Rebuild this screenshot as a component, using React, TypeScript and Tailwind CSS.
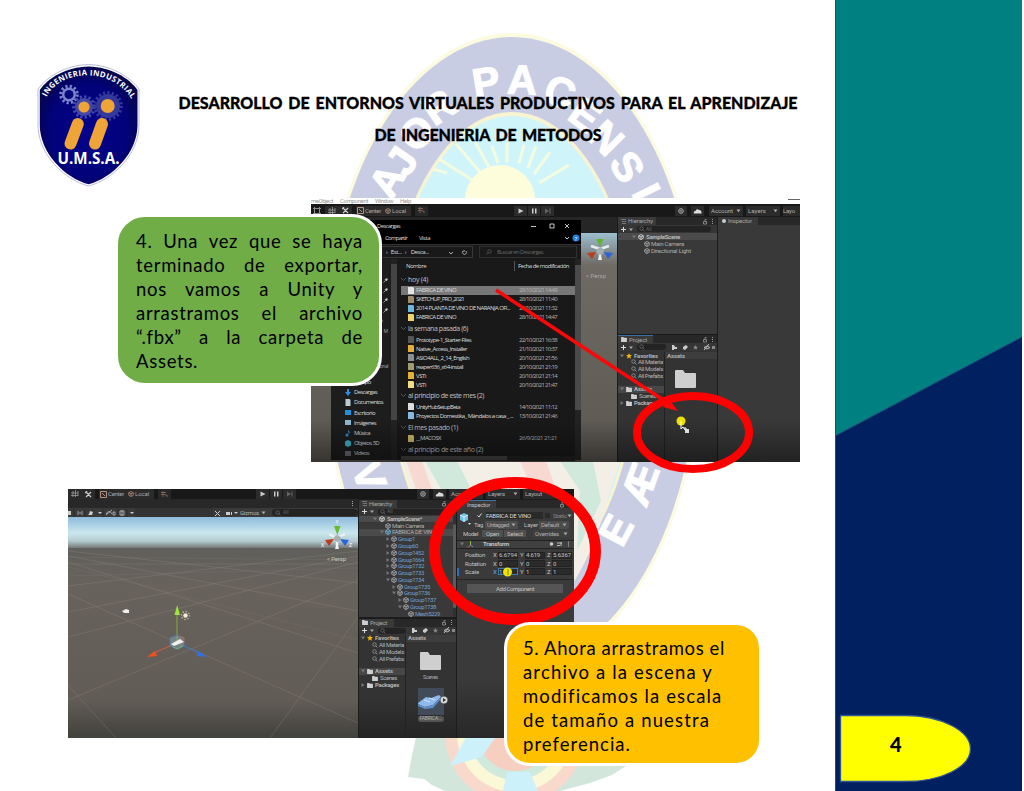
import React, { useLayoutEffect, useRef } from "react";

type FitProps = { children: string; w: number; className?: string };

/** Single line of text whose tracking is adjusted so that it spans `w` pixels. */
function Fit({ children, w, className = "" }: FitProps) {
  const ref = useRef<HTMLSpanElement>(null);
  useLayoutEffect(() => {
    const el = ref.current;
    if (!el) return;
    el.style.letterSpacing = "0px";
    const natural = el.getBoundingClientRect().width;
    el.style.letterSpacing = `${(w - natural) / children.length}px`;
  }, [children, w]);
  return (
    <span ref={ref} className={`inline-block shrink-0 whitespace-nowrap ${className}`}>
      {children}
    </span>
  );
}

const ringLetters: [string, number, number, number][] = [
  ["A", 387, 181, -60],
  ["J", 402, 161, -56],
  ["O", 417, 133, -44],
  ["R", 439, 107, -34],
  ["P", 486, 82, -9],
  ["A", 522, 80, 2],
  ["C", 560, 92, 22],
  ["E", 585, 115, 36],
  ["N", 606, 138, 45],
  ["S", 627, 167, 58],
  ["I", 646, 192, 64],
  ["V", 369, 476, 70],
  ["Æ", 640, 484, -70],
  ["E", 616, 530, -62],
];

function Watermark() {
  return (
    <svg className="absolute left-0 top-0" width="835" height="791" viewBox="0 0 835 791">
      <g>
        <path d="M420 720L412 755L408 777L424 779L432 785L445 791H560L590 783L612 775L626 766V730Z" fill="#d3e6dc" />
        <circle cx="515" cy="734" r="70" fill="#f8d9cc" />
        <circle cx="515" cy="734" r="58" fill="#fbf8d8" />
        <circle cx="515" cy="734" r="46" fill="#cfe9dc" />
        <circle cx="515" cy="734" r="37" fill="#f6cfc0" />
        <path d="M470 730L450 766L482 757L495 738Z M507 772L503 791H538L530 772Z" fill="#cdf1fa" />
      </g>
      <ellipse cx="512" cy="352" rx="189" ry="319" fill="#fcfbe0" />
      <ellipse cx="512" cy="352" rx="186" ry="315" fill="#c9cde3" />
      <ellipse cx="512" cy="352" rx="126" ry="240" fill="#f8f3d0" />
      <ellipse cx="512" cy="352" rx="123" ry="236" fill="#cff5fb" />
      <path d="M404 461H620L607 500Q595 550 570 588H470Q420 540 404 461Z" fill="#f3efe6" />
      <path d="M425 461l16 28h30l-14-28zM560 461l20 30-3 60 24-50-8-40z" fill="#d1e8dc" />
      <path d="M406 461l10 28h16l-10-28zM520 461l12 28h24l-10-28z" fill="#f7d9d2" />
      <path
        d="M474 181l-35-22M480 172l-24-28M489 167l-14-25M498 163l-6-17M507 162v-19M519 163l5-18M528 168l8-22M534 174l16-22M539 183l30-18M447 173l-14-4"
        stroke="#f4fbdf"
        strokeWidth="3"
      />
      <circle cx="500" cy="200" r="35" fill="#fdfddc" />
      <g fill="#ffffff" stroke="#ffffff" strokeWidth="1.200" fontFamily="Liberation Sans" fontWeight="700" fontSize="41" textAnchor="middle">
        {ringLetters.map(([c, x, y, a], i) => (
          <text key={i} transform={`translate(${x} ${y}) rotate(${a})`} y="14">
            {c}
          </text>
        ))}
      </g>
    </svg>
  );
}

function Gear({ cx, cy, r, fill }: { cx: number; cy: number; r: number; fill: string }) {
  return (
    <g fill={fill}>
      <circle cx={cx} cy={cy} r={r} />
      <circle cx={cx} cy={cy} r={r + 1.3} fill="none" stroke={fill} strokeWidth="3" strokeDasharray="2.200 2.200" />
    </g>
  );
}

function Shield() {
  return (
    <svg width="104" height="124" viewBox="36 63 104 124" className="shrink-0">
      <defs>
        <path id="shieldArc" d="M 46.500 97 C 60 68 117 66 134 104" />
        <radialGradient id="shieldFill" cx="50%" cy="55%" r="60%">
          <stop offset="0" stopColor="#03038c" />
          <stop offset="0.65" stopColor="#02027a" />
          <stop offset="1" stopColor="#050546" />
        </radialGradient>
      </defs>
      <path d="M88.500 64.500C65 65 47 77 38 89V125C38 155 65 180 88.500 186C112 180 139 155 139 125V89C130 77 112 65 88.500 64.500Z" fill="#fff" stroke="#b9bddb" strokeWidth="1" />
      <path d="M88.500 66.500C66 67 48 78 39.800 90V125C39.800 153 65 178 88.500 184.300C112 178 137.500 153 137.500 125V90C129 78 111 67 88.500 66.500Z" fill="url(#shieldFill)" />
      <Gear cx={69} cy={94.5} r={7} fill="#7d83cb" />
      <circle cx="69" cy="94.500" r="4.500" fill="#07077c" />
      <Gear cx={84} cy={107} r={9} fill="#454aa6" />
      <Gear cx={108} cy={106} r={12} fill="#34389a" />
      <circle cx="84" cy="107" r="5.600" fill="#eea436" />
      <circle cx="107.700" cy="106" r="7" fill="#eea436" />
      <path d="M77.800 124L70.500 143.500M102 124L95 143.500" stroke="#eea436" strokeWidth="12" strokeLinecap="round" />
      <text fontFamily="Open Sans" fontSize="7.800" fontWeight="700" fill="#fff">
        <textPath href="#shieldArc" textLength="101">
          INGENIERIA INDUSTRIAL
        </textPath>
      </text>
      <text x="57.500" y="164" fontFamily="Open Sans" fontSize="15.500" fontWeight="700" fill="#fff" textLength="62" lengthAdjust="spacingAndGlyphs">
        U.M.S.A.
      </text>
    </svg>
  );
}

function Cube({ color = "#b8b8b8" }: { color?: string }) {
  return (
    <svg width="6" height="6" viewBox="0 0 12 12" className="shrink-0" fill="none" stroke={color} strokeWidth="1.500">
      <path d="M6 1l4.500 2.500v5L6 11 1.500 8.500v-5zM1.500 3.500L6 6l4.500-2.500M6 6v5" />
    </svg>
  );
}

function FolderIcon({ size = "small", color = "#cfcfcf" }: { size?: "small" | "large"; color?: string }) {
  return (
    <svg className={size === "large" ? "h-[18px] w-[21px] shrink-0" : "h-[5px] w-[6px] shrink-0"} viewBox="0 0 21 18" fill={color}>
      <path d="M1 0h7l2 3h10q1 0 1 1v13q0 1-1 1H1q-1 0-1-1V1q0-1 1-1z" />
    </svg>
  );
}

function SearchIcon({ className = "text-[#999]" }: { className?: string }) {
  return (
    <svg width="6" height="6" viewBox="0 0 12 12" className={`shrink-0 ${className}`} fill="none" stroke="currentColor" strokeWidth="1.300">
      <circle cx="5" cy="5" r="3.500" />
      <path d="M7.500 7.500l3.500 3.500" />
    </svg>
  );
}

function Triangle({ open = false }: { open?: boolean }) {
  return (
    <svg width="4" height="4" viewBox="0 0 8 8" className="shrink-0" fill="#777">
      <path d={open ? "M0 1h8L4 7z" : "M1 0v8l6-4z"} />
    </svg>
  );
}

function Caret() {
  return (
    <svg width="5" height="4" viewBox="0 0 5 4" className="shrink-0" fill="#aaa">
      <path d="M.500.500h4L2.500 3.300z" />
    </svg>
  );
}

function LockDots() {
  return (
    <svg width="13" height="7" viewBox="0 0 13 7" className="ml-auto mr-[2px] shrink-0" fill="none" stroke="#999">
      <path d="M1.500 3.500h3v2.500h-3zM3 3V1.500h1.500" strokeWidth="0.800" />
      <path d="M10.500 1v1M10.500 3v1M10.500 5v1" />
    </svg>
  );
}

function SceneTools({ first = false }: { first?: boolean }) {
  return (
    <>
      {first && (
        <svg width="14" height="11" viewBox="0 0 14 11" className="shrink-0" fill="none" stroke="#8d8d8d">
          <path d="M3.500 3.500h5v5h-5zM2 3.500h1.500V2M8.500 2v1.500H10M2 8.500h1.500V10M8.500 10V8.500H10" />
        </svg>
      )}
      <div className="flex h-[10px] w-[14px] items-center justify-center bg-[#2a2a2a]">
        <svg width="8" height="8" viewBox="0 0 8 8" stroke="#999" strokeWidth="0.800" fill="none">
          <path d="M0 3h7M0 5.500h7M2 1v6M4.500 0v7M7 1v5" />
        </svg>
      </div>
      <div className="flex h-[10px] w-[13px] items-center justify-center bg-[#2a2a2a]">
        <svg width="7" height="7" viewBox="0 0 7 7" stroke="#ccc" strokeWidth="1.200" fill="none">
          <path d="M1 1l5 5M6 1L1 6M0 2l2-2" />
        </svg>
      </div>
      <div className="ml-[4px] flex h-[10px] w-[55px] items-center gap-[1px] bg-[#2b2b2b] text-[#a8a8a8]">
        <svg width="7" height="7" viewBox="0 0 7 7" className="ml-[1px]" stroke="#b5917f" fill="none">
          <path d="M.500.500h6v6h-6zM2 2l3 3" />
        </svg>
        <Fit w={16}>Center</Fit>
        <span className="ml-[3px] flex">
          <Cube color="#c0917d" />
        </span>
        <Fit w={14}>Local</Fit>
      </div>
      <div className="ml-[4px] flex h-[10px] w-[13px] items-center justify-center bg-[#272727]">
        <svg width="7" height="7" viewBox="0 0 7 7" stroke="#7d5f56" fill="none">
          <path d="M0 1.500h5M0 3.500h4M2 0v6M4 4h2v2" />
        </svg>
      </div>
    </>
  );
}

function PlayButtons() {
  return (
    <svg width="40" height="10" viewBox="0 0 40 10" className="shrink-0">
      <path d="M0 0h13v10H0zM14 0h12v10H14zM27 0h13v10H27z" fill="#2c2c2c" />
      <path d="M4.500 2.500l5 2.500-5 2.500zM18 2.500h1.500v5H18zM21 2.500h1.500v5H21z" fill="#ccc" />
      <path d="M31 2.500l4 2.500-4 2.500zM35.500 2.500h1v5h-1z" fill="#666" />
    </svg>
  );
}

function Dropdown({ label, w, box }: { label: string; w: number; box: string }) {
  return (
    <div className={`flex shrink-0 items-center overflow-hidden pl-[2px] text-[#b0b0b0] ${box}`}>
      <Fit w={w}>{label}</Fit>
      <span className="ml-auto mr-[2px] flex">
        <Caret />
      </span>
    </div>
  );
}

function AccountIcons() {
  return (
    <svg width="29" height="10" viewBox="0 0 29 10" className="shrink-0">
      <path d="M0 0h12v10H0zM16 0h13v10H16z" fill="#2b2b2b" />
      <circle cx="6" cy="5" r="2.300" fill="none" stroke="#aaa" />
      <path d="M4.500 5h3M6 3.500v3" stroke="#aaa" strokeWidth="0.700" />
      <path d="M19 7.500q-1-2 1.500-2.500 1-3 3.500-1 3 0 2.500 3.500z" fill="#ddd" />
    </svg>
  );
}

function PanelTab({ label, w, icon, box }: { label: string; w: number; icon: "list" | "folder"; box: string }) {
  return (
    <div className="flex h-[8px] shrink-0 items-center bg-[#282828]">
      <div className={`flex h-full items-center gap-[2px] bg-[#3a3a3a] pl-[3px] text-[#a8a8a8] ${box}`}>
        {icon === "folder" ? (
          <FolderIcon />
        ) : (
          <svg width="5" height="5" viewBox="0 0 5 5" stroke="#888" strokeWidth="0.800">
            <path d="M0 .500h5M1 2.500h4M1 4.500h4" />
          </svg>
        )}
        <Fit w={w}>{label}</Fit>
      </div>
      <LockDots />
    </div>
  );
}

function AddSearch({ label, field, project = false }: { label?: string; field: string; project?: boolean }) {
  return (
    <div className="flex h-[8px] shrink-0 items-center bg-[#363636]">
      <svg width="13" height="7" viewBox="0 0 13 7" className="ml-[3px] shrink-0">
        <path d="M0 3.500h5M2.500 1v5" stroke="#ddd" />
        <path d="M8 2.500h4L10 5z" fill="#aaa" />
      </svg>
      <div className={`ml-[3px] flex h-[6px] items-center gap-[1px] rounded-sm bg-[#232323] pl-[2px] text-[5px] text-[#666] ${field}`}>
        <SearchIcon className="text-[#777]" />
        {label}
      </div>
      {project && (
        <svg width="45" height="7" viewBox="0 0 45 7" className="ml-[5px] shrink-0" fill="#ccc">
          <path d="M1 1h2l1 2h2v2H3v1H1zM12 5V3l3-2 2 2-3 3z" />
          <path d="M24.500 1l.8 1.700h1.800l-1.500 1.200.6 1.900-1.700-1-1.700 1 .6-1.900-1.500-1.200h1.800z" fill="#888" />
          <path d="M33 3.500q3-3 6 0-3 3-6 0zM33 6l5-6" fill="none" stroke="#bbb" />
          <path d="M41 2h3v3h-3z" fill="#888" />
        </svg>
      )}
    </div>
  );
}

function ProjectTree({ gap }: { gap: string }) {
  return (
    <div className="flex w-[46px] shrink-0 flex-col overflow-hidden text-[#b5b5b5]">
      <div className="flex h-[7px] items-center gap-[2px] pl-[2px] font-bold">
        <Triangle open />
        <svg width="6" height="6" viewBox="0 0 12 12" fill="#f4b400" className="shrink-0">
          <path d="M6 0l1.800 4H12L8.800 6.800 10 11.500 6 9l-4 2.500 1.200-4.700L0 4h4.200z" />
        </svg>
        <Fit w={24}>Favorites</Fit>
      </div>
      {["All Materia", "All Models", "All Prefabs"].map((name) => (
        <div key={name} className="flex h-[6.800px] items-center gap-[1px] pl-[13px]">
          <SearchIcon className="text-[#aaa]" />
          <Fit w={25}>{name}</Fit>
        </div>
      ))}
      <div className={`flex h-[7px] items-center gap-[2px] bg-[#474747] pl-[2px] font-bold ${gap}`}>
        <Triangle open />
        <FolderIcon />
        <Fit w={18}>Assets</Fit>
      </div>
      <div className="flex h-[6.800px] items-center gap-[2px] pl-[13px]">
        <FolderIcon />
        <Fit w={17}>Scenes</Fit>
      </div>
      <div className="flex h-[6.800px] items-center gap-[2px] pl-[2px] font-bold">
        <Triangle />
        <FolderIcon />
        <Fit w={24}>Packages</Fit>
      </div>
    </div>
  );
}

function Gizmo() {
  return (
    <svg width="34" height="48" viewBox="0 0 34 48" className="shrink-0">
      <path d="M17 16L8 13M17 16l9-3M17 16v11" stroke="#e8eef0" strokeWidth="2.500" />
      <path d="M15 27l2-7 2 7z" fill="#f0f0f0" />
      <path d="M13.500 6h7L17 14z" fill="#5fb52b" />
      <path d="M4 20l9-1-4 7z" fill="#bd3c1d" />
      <path d="M21 19l9 1-5 6z" fill="#2b63d9" />
      <path d="M14 16l4-2 3 3-1 4-4 1-3-3z" fill="#a4adaf" />
      <text x="3" y="45" fontSize="6" fill="#a9a9a3" fontFamily="Roboto" textLength="20">
        &lt; Persp
      </text>
    </svg>
  );
}

type Entry = { name: string; date?: string; w: number; icon?: string; group?: boolean; selected?: boolean };

const entries: Entry[] = [
  { name: "hoy (4)", w: 20, group: true },
  { name: "FABRICA DE VINO", w: 40, date: "28/10/2021 14:49", icon: "#e4e4e4", selected: true },
  { name: "SKETCHUP_PRO_2021", w: 48, date: "28/10/2021 11:40", icon: "#9d8b6a" },
  { name: "2014 PLANTA DE VINO DE NARANJA OFI...", w: 94, date: "28/10/2021 11:32", icon: "#6fb6dd" },
  { name: "FABRICA DE VINO", w: 40, date: "28/10/2021 14:47", icon: "#f2d06a" },
  { name: "la semana pasada (6)", w: 60, group: true },
  { name: "Prototype-1_Starter-Files", w: 55, date: "22/10/2021 16:38", icon: "#555555" },
  { name: "Native_Access_Installer", w: 51, date: "21/10/2021 10:37", icon: "#e5ae34" },
  { name: "ASIO4ALL_2_14_English", w: 53, date: "20/10/2021 21:56", icon: "#8a8f94" },
  { name: "reaper636_x64-install", w: 47, date: "20/10/2021 21:19", icon: "#a39b70" },
  { name: "VSTi", w: 10, date: "20/10/2021 21:14", icon: "#e5ae34" },
  { name: "VSTi", w: 10, date: "20/10/2021 21:47", icon: "#f3dc85" },
  { name: "al principio de este mes (2)", w: 76, group: true },
  { name: "UnityHubSetupBeta", w: 44, date: "14/10/2021 11:12", icon: "#dddddd" },
  { name: "Proyectos Domestika_ Mándalos a casa _ ...", w: 97, date: "13/10/2021 21:46", icon: "#86bbdf" },
  { name: "El mes pasado (1)", w: 50, group: true },
  { name: "__MACOSX", w: 25, date: "26/9/2021 21:21", icon: "#cdb869" },
  { name: "al principio de este año (2)", w: 75, group: true },
];

const places = [
  { name: "Equipo", w: 17, color: "#4aa3d8" },
  { name: "Descargas", w: 23, color: "#2f8de0" },
  { name: "Documentos", w: 29, color: "#b9cbd6" },
  { name: "Escritorio", w: 21, color: "#1f8fe0" },
  { name: "Imágenes", w: 22, color: "#8fb8d4" },
  { name: "Música", w: 16, color: "#2c86cf" },
  { name: "Objetos 3D", w: 25, color: "#3fb5cd" },
  { name: "Videos", w: 15, color: "#6a6d75" },
];

function Pin() {
  return (
    <svg width="5" height="5" viewBox="0 0 5 5" className="shrink-0" stroke="#bbb" fill="#bbb">
      <path d="M.500 4.500l2-2M2 1.500L3.500 3 4.500 1 4 .500z" strokeWidth="0.800" />
    </svg>
  );
}

function Explorer() {
  return (
    <div className="absolute left-[20px] top-[22px] flex h-[240px] w-[250px] flex-col bg-[#191919] [font-family:'Open_Sans',sans-serif] text-[6px] text-[#dcdcdc]">
      <div className="flex h-[12px] items-center bg-black pl-[46px]">
        <Fit w={23}>Descargas</Fit>
        <svg width="50" height="8" viewBox="0 0 50 8" className="ml-auto mr-[6px]" stroke="#ddd" fill="none">
          <path d="M6 4.500h5M25 2h4v4h-4zM40 2l4 4M44 2l-4 4" strokeWidth="0.900" />
        </svg>
      </div>
      <div className="flex h-[12px] items-center bg-black pl-[54px]">
        <Fit w={22}>Compartir</Fit>
        <Fit w={11} className="ml-[12px]">Vista</Fit>
        <svg width="16" height="8" viewBox="0 0 16 8" className="ml-auto mr-[1px]">
          <path d="M1 3l2 2 2-2" stroke="#ccc" fill="none" />
          <circle cx="12" cy="4" r="3.500" fill="#1e7fdc" />
          <text x="10.500" y="6.500" fontSize="6" fill="#fff">?</text>
        </svg>
      </div>
      <div className="flex h-[15px] items-center border-t border-[#333] pl-[42px]">
        <div className="flex h-[12px] w-[100px] items-center border border-[#383838] pl-[3px]">
          <svg width="7" height="7" viewBox="0 0 7 7" fill="#2f8de0">
            <path d="M0 0h4v4H0zM4 2l1.500 1.500L4 5z" />
          </svg>
          <span className="ml-[2px]">›</span>
          <Fit w={11} className="ml-[3px]">Est...</Fit>
          <span className="ml-[3px]">›</span>
          <Fit w={18} className="ml-[4px]">Desca...</Fit>
          <svg width="24" height="7" viewBox="0 0 24 7" className="ml-auto mr-[2px]" stroke="#aaa" fill="none">
            <path d="M3 3l2 2 2-2M17 2a2 2 0 1 0 3 0M18 1v2" />
          </svg>
        </div>
        <div className="ml-[6px] flex h-[12px] w-[98px] items-center gap-[5px] border border-[#2f2f2f] pl-[6px] text-[#666]">
          <SearchIcon className="-scale-x-100 text-[#666]" />
          <Fit w={46}>Buscar en Descargas</Fit>
        </div>
      </div>
      <div className="flex min-h-0 flex-1">
        <div className="flex w-[60px] shrink-0 flex-col overflow-hidden bg-[#1d1d1d]">
          <div className="flex h-[118px] shrink-0 flex-col items-end gap-[5px] pr-[3px] pt-[19px] text-[5px] text-[#aaa]">
            <Pin />
            <Pin />
            <Pin />
            <Pin />
            <span className="pr-[5px] leading-[5px]">A</span>
            <span className="mt-[1px] leading-[5px]">- M</span>
            <Fit w={14} className="mt-[25px] leading-[5px]">ersonal</Fit>
          </div>
          {places.map((p) => (
            <div key={p.name} className="flex h-[10.200px] shrink-0 items-center gap-[3px] pl-[14px]">
              <svg width="6" height="7" viewBox="0 0 6 7" className="shrink-0">
                {p.name === "Descargas" ? (
                  <path d="M2 0h2v3h2L3 7 0 3h2z" fill={p.color} />
                ) : p.name === "Música" ? (
                  <path d="M3 0l2 2v1L3.500 2v3a1.500 1.500 0 1 1-.5-1z" fill={p.color} />
                ) : p.name === "Documentos" ? (
                  <path d="M.500 0h4l1 1v6h-5z" fill={p.color} />
                ) : p.name === "Objetos 3D" ? (
                  <path d="M3 0l3 1.500v4L3 7 0 5.500v-4z" fill={p.color} />
                ) : (
                  <path d="M0 1h6v5H0z" fill={p.color} />
                )}
              </svg>
              <Fit w={p.w}>{p.name}</Fit>
            </div>
          ))}
        </div>
        <div className="flex w-[6px] shrink-0 flex-col bg-[#222]">
          <span className="h-[5px] bg-[#222]" />
          <span className="h-[156px] bg-[#444]" />
        </div>
        <div className="flex min-w-0 flex-1 flex-col pl-[4px]">
          <div className="flex h-[13.500px] shrink-0 items-center pl-[5px]">
            <Fit w={20}>Nombre</Fit>
            <span className="ml-[88px] h-[10px] w-px bg-[#555]" />
            <Fit w={51} className="ml-[3px]">Fecha de modificación</Fit>
          </div>
          {entries.map((e, i) =>
            e.group ? (
              <div key={i} className="flex h-[13.300px] shrink-0 items-center gap-[2px] text-[7px] text-[#c0c0c0]">
                <svg width="5" height="5" viewBox="0 0 5 5" stroke="#555" fill="none" className="shrink-0">
                  <path d="M0 1l2.500 2.500L5 1" />
                </svg>
                <Fit w={e.w}>{e.name}</Fit>
              </div>
            ) : (
              <div key={i} className={`flex h-[9px] shrink-0 items-center pl-[7px] ${e.selected ? "bg-[#777]" : ""}`}>
                <svg width="6" height="7" viewBox="0 0 6 7" className="shrink-0">
                  <path d="M0 0h5l1 1v6H0z" fill={e.icon} />
                </svg>
                <div className="ml-[2px] w-[103px]">
                  <Fit w={e.w}>{e.name}</Fit>
                </div>
                <Fit w={38} className="text-[#b3b3b3]">{e.date ?? ""}</Fit>
              </div>
            )
          )}
          <div className="mt-auto h-[5px] shrink-0 bg-[#222]">
            <div className="h-[4px] w-[106px] bg-[#454545]" />
          </div>
        </div>
        <div className="flex w-[6px] shrink-0 flex-col bg-[#232323] pt-[6px]">
          <span className="h-[145px] bg-[#4a4a4a]" />
        </div>
      </div>
    </div>
  );
}

function FirstFigure() {
  return (
    <section className="relative ml-[311px] flex h-[264px] w-[489px] flex-col [font-family:Roboto,sans-serif] text-[6px] leading-none">
      <div className="flex h-[6px] shrink-0 items-end gap-[7px] overflow-hidden bg-white text-[#999]">
        <Fit w={22} className="h-[5px] leading-[3px]">meObject</Fit>
        <Fit w={28} className="h-[5px] leading-[3px]">Component</Fit>
        <Fit w={18} className="h-[5px] leading-[3px]">Window</Fit>
        <Fit w={11} className="h-[5px] leading-[3px]">Help</Fit>
        <span className="mb-[4px] ml-auto h-[1.500px] w-[12px] bg-[#666]" />
      </div>
      <div className="flex h-[13px] shrink-0 items-center overflow-hidden bg-[#181818]">
        <SceneTools first />
        <span className="w-[86px] shrink-0" />
        <PlayButtons />
        <span className="w-[121px] shrink-0" />
        <AccountIcons />
        <span className="w-[5px] shrink-0" />
        <Dropdown label="Account" w={22} box="h-[10px] w-[34px] bg-[#2b2b2b]" />
        <span className="w-[3px] shrink-0" />
        <Dropdown label="Layers" w={18} box="h-[10px] w-[34px] bg-[#2b2b2b]" />
        <span className="w-[3px] shrink-0" />
        <div className="flex h-[10px] flex-1 items-center bg-[#2b2b2b] text-[#b0b0b0]">
          <Fit w={12}>Layo</Fit>
        </div>
      </div>
      <div className="flex min-h-0 flex-1">
        <div className="flex w-[306px] shrink-0 flex-col bg-[#262626]">
          <div className="h-[16px] shrink-0" />
          <div className="flex flex-1 justify-end bg-linear-to-b from-[#9cbfd0] from-0% via-[#6f6b64] via-14% to-[#5b5751]">
            <Gizmo />
          </div>
        </div>
        <div className="flex w-[101px] shrink-0 flex-col border-x border-[#1c1c1c] bg-[#393939]">
          <PanelTab label="Hierarchy" w={25} icon="list" box="w-[38px]" />
          <AddSearch label="All" field="w-[74px]" />
          <div className="flex h-[7px] shrink-0 items-center gap-[2px] bg-[#4b4b4b] pl-[14px] font-bold text-[#b8b8b8]">
            <Triangle open />
            <Cube color="#eee" />
            <Fit w={34}>SampleScene</Fit>
          </div>
          <div className="flex h-[7px] shrink-0 items-center gap-[1px] pl-[26px] text-[#b0b0b0]">
            <Cube />
            <Fit w={33}>Main Camera</Fit>
          </div>
          <div className="flex h-[7px] shrink-0 items-center gap-[1px] pl-[26px] text-[#b0b0b0]">
            <Cube />
            <Fit w={40}>Directional Light</Fit>
          </div>
          <div className="h-[81px] shrink-0 border-b border-[#1a1a1a]" />
          <PanelTab label="Project" w={18} icon="folder" box="w-[35px] border-t border-[#3f6f9f]" />
          <AddSearch field="w-[29px]" project />
          <div className="flex flex-1 bg-[#333] pt-px">
            <ProjectTree gap="mt-[6.500px]" />
            <div className="flex flex-1 flex-col border-l border-[#222] text-[#b0b0b0]">
              <div className="flex h-[7px] items-center bg-[#3d3d3d] pl-[2px] font-bold">
                <Fit w={18}>Assets</Fit>
              </div>
              <div className="mt-[11px] pl-[10px]">
                <FolderIcon size="large" />
              </div>
            </div>
          </div>
        </div>
        <div className="flex flex-1 flex-col bg-[#393939]">
          <div className="flex h-[8px] bg-[#282828]">
            <div className="flex w-[40px] items-center gap-[2px] bg-[#393939] pl-[4px] text-[#a8a8a8]">
              <span className="h-[4px] w-[4px] rounded-full bg-[#ccc]" />
              <Fit w={24}>Inspector</Fit>
            </div>
          </div>
        </div>
      </div>
      <Explorer />
      <svg className="absolute left-0 top-0 overflow-visible" width="489" height="264" viewBox="311 198 489 264">
        <defs>
          <linearGradient id="fade" x2="0" y2="1">
            <stop offset="0" stopColor="#000" stopOpacity="0" />
            <stop offset="1" stopColor="#000" stopOpacity="0.400" />
          </linearGradient>
        </defs>
        <path d="M311 420h489v42H311z" fill="url(#fade)" />
        <circle cx="681" cy="421" r="4.500" fill="#f0e000" />
        <path d="M681 421v8l2-2 2 3M684 428h2v2" stroke="#fff" fill="none" />
        <path d="M685 429h4v4h-4z" fill="#ddd" />
        <path d="M496 290L668 403" stroke="#fb0707" strokeWidth="3.500" />
        <path d="M663 407l6-8 9 12z" fill="#fb0707" />
        <ellipse cx="693" cy="432.500" rx="56" ry="36.500" fill="none" stroke="#ff0000" strokeWidth="8" />
      </svg>
    </section>
  );
}

type Node = { name: string; w: number; pad: string; leaf?: boolean; open?: boolean };
const nodes: Node[] = [
  { name: "Group1", w: 17, pad: "pl-[27px]" },
  { name: "Group60", w: 20, pad: "pl-[27px]" },
  { name: "Group1452", w: 26, pad: "pl-[27px]" },
  { name: "Group1664", w: 26, pad: "pl-[27px]" },
  { name: "Group1732", w: 26, pad: "pl-[27px]" },
  { name: "Group1733", w: 26, pad: "pl-[27px]" },
  { name: "Group1734", w: 26, pad: "pl-[27px]", open: true },
  { name: "Group1735", w: 26, pad: "pl-[33px]" },
  { name: "Group1736", w: 26, pad: "pl-[33px]", open: true },
  { name: "Group1737", w: 26, pad: "pl-[39px]" },
  { name: "Group1738", w: 26, pad: "pl-[39px]", open: true },
  { name: "Mesh5229", w: 25, pad: "pl-[44px]", leaf: true },
];

function SceneView() {
  return (
    <svg width="290" height="221" viewBox="68 517 290 221" className="block shrink-0">
      <defs>
        <linearGradient id="sky" x2="0" y2="1">
          <stop offset="0" stopColor="#8ebbdc" />
          <stop offset="0.500" stopColor="#cbe7ee" />
          <stop offset="0.750" stopColor="#b2cbd0" />
          <stop offset="1" stopColor="#6b6c69" />
        </linearGradient>
        <linearGradient id="ground" x2="0" y2="1">
          <stop offset="0" stopColor="#605f5b" />
          <stop offset="0.200" stopColor="#68625c" />
          <stop offset="0.800" stopColor="#625c56" />
          <stop offset="1" stopColor="#42413c" />
        </linearGradient>
      </defs>
      <path d="M68 517h290v32H68z" fill="url(#sky)" />
      <path d="M68 548h290v190H68z" fill="url(#ground)" />
      <g stroke="#a09b91" strokeWidth="0.600" opacity="0.400" fill="none">
        <path d="M68 594L358 723M68 562L358 653M68 556L358 611M68 551L358 583M68 685L116 738M68 700L358 580M68 637L358 562M68 612L358 556M68 586L358 551M68 564H358M270 738L358 617" />
        <path d="M68 567L358 640M68 576L358 568M68 557L358 560" opacity="0.500" />
      </g>
      <path d="M122 611l4-2 3 1v3h-5z" fill="#f0f0ed" />
      <path d="M177 642v-28" stroke="#84ad37" />
      <path d="M174.500 615l2.700-10 2.800 10z" fill="#9be637" />
      <circle cx="185.500" cy="615.500" r="2.200" fill="#f5eccb" />
      <circle cx="185.500" cy="615.500" r="4" fill="none" stroke="#ddd4b4" strokeWidth="1.300" strokeDasharray="1 2.100" />
      <path d="M172 645l-18 8" stroke="#dd5a36" />
      <path d="M147 657l8-6 2 5z" fill="#f0501f" />
      <path d="M182 645l17 8" stroke="#4074ce" />
      <path d="M207 657l-9-6-1 5z" fill="#2f70ea" />
      <path d="M170 638l7-3 7 3v8l-7 3-7-3z" fill="#8aa3a6" fillOpacity="0.500" stroke="#5879a4" />
      <path d="M180 636l4 2v5" fill="none" stroke="#c46149" />
      <path d="M171 644l9-5 4 3-10 4z" fill="#eef1f0" />
      <path d="M173 647l4 2 6-3" stroke="#6fb183" fill="none" />
      <g transform="translate(320 519)">
        <path d="M17 19L9 15M17 19l8-4M17 18v9" stroke="#eef2f2" strokeWidth="2.500" />
        <path d="M15 30l2-7 2 7z" fill="#f4f4f4" />
        <path d="M14 7h6.500l-3.200 9z" fill="#65bd2c" />
        <path d="M5 21l9-1-5 7z" fill="#bd3c1d" />
        <path d="M20 20l9 1-4 6z" fill="#2b63d9" />
        <path d="M14 18l3-2 4 2-1 4-3 1-3-2z" fill="#a8afb0" />
        <text x="15.500" y="5" fontSize="5" fill="#fff" fontFamily="Roboto">Y</text>
        <text x="1" y="28" fontSize="5" fill="#fff" fontFamily="Roboto">X</text>
        <text x="29" y="28" fontSize="5" fill="#fff" fontFamily="Roboto">Z</text>
        <text x="7" y="42" fontSize="6" fill="#c5c5c1" fontFamily="Roboto" textLength="19">
          &lt; Persp
        </text>
      </g>
    </svg>
  );
}

function VectorRow({ label, w, values, active = false }: { label: string; w: number; values: string[]; active?: boolean }) {
  return (
    <div className={`flex h-[8.400px] shrink-0 items-center ${active ? "border-l-2 border-[#2e6fb5] pl-[6px]" : "pl-[8px]"}`}>
      <div className="w-[28px]">
        <Fit w={w}>{label}</Fit>
      </div>
      {["X", "Y", "Z"].map((axis, i) => (
        <div key={axis} className="flex w-[27px] items-center">
          <span className={`w-[5px] ${active && i === 0 ? "text-[#68a7ec]" : ""}`}>{axis}</span>
          <span className={`mr-[2px] flex h-[7px] flex-1 items-center whitespace-nowrap border bg-[#2a2a2a] ${active && i === 0 ? "border-[#3a79bb]" : "border-[#222]"}`}>
            <Fit w={values[i].length > 5 ? 18 : values[i].length > 1 ? 14 : 3}>{values[i]}</Fit>
          </span>
        </div>
      ))}
    </div>
  );
}

function Inspector() {
  return (
    <div className="flex min-w-0 flex-1 flex-col overflow-hidden bg-linear-to-b from-[#3a3a3a] from-75% to-[#282828] text-[#c2c2c2]">
      <div className="h-px shrink-0 bg-[#1c1c1c]" />
      <div className="flex h-[8px] shrink-0 items-center bg-[#282828]">
        <div className="flex h-full w-[39px] items-center border-t border-[#3f6f9f] bg-[#3a3a3a] pl-[10px]">
          <Fit w={23}>Inspector</Fit>
        </div>
        <LockDots />
      </div>
      <div className="flex h-[31.500px] shrink-0 pt-[3px]">
        <svg width="13" height="14" viewBox="0 0 13 14" className="ml-[2px] mt-[1px] shrink-0">
          <path d="M5 1l4 2v5l-4 2-4-2V3z" fill="#6fc1ef" />
          <path d="M5 5v5M1 3l4 2 4-2" stroke="#e5f3fb" fill="none" />
          <path d="M9 11h3l-1.500 2z" fill="#ddd" />
        </svg>
        <div className="flex min-w-0 flex-1 flex-col">
          <div className="flex h-[9px] items-center">
            <svg width="5" height="5" viewBox="0 0 5 5" className="ml-[5px] mr-[4px] shrink-0" stroke="#ddd" fill="none">
              <path d="M.500 2.500L2 4l2.500-3.500" />
            </svg>
            <div className="flex h-[7px] w-[57px] items-center bg-[#2a2a2a] text-[#ddd]">
              <Fit w={45}>FABRICA DE VINO</Fit>
            </div>
            <span className="ml-[2px] h-[5px] w-[5px] bg-[#2a2a2a]" />
            <Fit w={14} className="ml-[3px] text-[#888]">Static</Fit>
            <Caret />
          </div>
          <div className="flex h-[9.500px] items-center pl-[2px]">
            <Fit w={9}>Tag</Fit>
            <Dropdown label="Untagged" w={22} box="ml-[2px] h-[7.500px] w-[33px] bg-[#4c4c4c]" />
            <Fit w={14} className="ml-[6px]">Layer</Fit>
            <Dropdown label="Default" w={18} box="ml-[1px] h-[7.500px] w-[30px] bg-[#4c4c4c]" />
          </div>
          <div className="-ml-[9px] flex h-[8.500px] items-center">
            <Fit w={15}>Model</Fit>
            <div className="ml-[4px] flex h-[7px] w-[21px] items-center justify-center bg-[#505050]">
              <Fit w={13}>Open</Fit>
            </div>
            <div className="ml-[1px] flex h-[7px] w-[22px] items-center justify-center bg-[#505050]">
              <Fit w={16}>Select</Fit>
            </div>
            <Dropdown label="Overrides" w={24} box="ml-[7px] h-[7px] w-[37px] bg-[#404040]" />
          </div>
        </div>
      </div>
      <div className="flex h-[9px] shrink-0 items-center border-y border-[#222] bg-[#404040] pl-[3px] font-bold">
        <Triangle open />
        <svg width="7" height="7" viewBox="0 0 7 7" className="ml-[3px]" fill="none">
          <path d="M3.500 0v4" stroke="#7fc64a" />
          <path d="M3.500 4L1 6.500" stroke="#e6623b" />
          <path d="M3.500 4L6 6" stroke="#5a95e6" />
        </svg>
        <Fit w={26} className="ml-[9px]">Transform</Fit>
        <svg width="22" height="6" viewBox="0 0 22 6" className="ml-auto mr-[3px] shrink-0" stroke="#ccc" fill="none">
          <circle cx="2.500" cy="3" r="1.800" fill="#ccc" stroke="none" />
          <path d="M8 2h5M8 4.500h3M12 1v4M19.500.500v1M19.500 2.500v1M19.500 4.500v1" strokeWidth="0.900" />
        </svg>
      </div>
      <div className="h-[2.500px] shrink-0" />
      <VectorRow label="Position" w={20} values={["6.6794", "4.619", "5.6367"]} />
      <VectorRow label="Rotation" w={21} values={["0", "0", "0"]} />
      <VectorRow label="Scale" w={14} values={["1", "1", "1"]} active />
      <div className="mt-[3px] shrink-0 border-t border-[#252525] pl-[10px] pt-[4px]">
        <div className="flex h-[9px] w-[96px] items-center justify-center bg-[#555]">
          <Fit w={38}>Add Component</Fit>
        </div>
      </div>
    </div>
  );
}

function SecondFigure() {
  return (
    <section className="relative ml-[68px] mt-[27px] flex h-[249px] w-[506px] flex-col [font-family:Roboto,sans-serif] text-[6px] leading-none">
      <div className="flex h-[10px] shrink-0 items-center overflow-hidden bg-[#181818]">
        <SceneTools />
        <span className="w-[85px] shrink-0" />
        <PlayButtons />
        <span className="w-[121px] shrink-0" />
        <AccountIcons />
        <span className="w-[3px] shrink-0" />
        <Dropdown label="Account" w={22} box="h-[10px] w-[34px] bg-[#2b2b2b]" />
        <span className="w-[3px] shrink-0" />
        <Dropdown label="Layers" w={17} box="h-[10px] w-[34px] bg-[#2b2b2b]" />
        <span className="w-[3px] shrink-0" />
        <Dropdown label="Layout" w={17} box="h-[10px] w-[34px] bg-[#2b2b2b]" />
      </div>
      <div className="flex min-h-0 flex-1">
        <div className="flex w-[290px] shrink-0 flex-col bg-[#282828]">
          <div className="flex h-[9px] shrink-0 items-center justify-end pr-[4px]">
            <svg width="2" height="6" viewBox="0 0 2 6" fill="#aaa">
              <path d="M0 0h1v1H0zM0 2h1v1H0zM0 4h1v1H0z" />
            </svg>
          </div>
          <div className="flex h-[9px] shrink-0 items-center bg-[#3a3a3a] text-[#b0b0b0]">
            <svg width="67" height="8" viewBox="0 0 67 8" className="shrink-0">
              <path d="M0 2h3v4H0zM21 5l1-3 3 1-1 3h-4zM30 3h4l-2 2z" fill="#ccc" />
              <path d="M10 2v4M12 3v2M14 2v4M38 5q3-5 6 0M38 6l6-5M45 3h2v3h-2zM52 2h4v4h-4zM54 1v6" stroke="#bbb" strokeWidth="0.800" fill="none" />
              <path d="M62 3h4l-2 2z" fill="#ccc" />
              <path d="M6 0v8M17 0v8M35 0v8M50 0v8M59 0v8" stroke="#222" strokeWidth="0.600" />
            </svg>
            <span className="h-full w-[78px] bg-[#333]" />
            <svg width="25" height="8" viewBox="0 0 25 8" className="shrink-0">
              <path d="M2 2l5 5M7 2L2 7" stroke="#ccc" />
              <path d="M13 3h4v3h-4zM18 3v3h1V3zM21 3h4l-2 2z" fill="#ccc" />
            </svg>
            <Fit w={19} className="ml-[2px]">Gizmos</Fit>
            <span className="ml-[2px] flex">
              <Caret />
            </span>
            <div className="ml-[6px] flex h-[7px] w-[86px] items-center gap-[2px] rounded-sm bg-[#232323] pl-[3px] text-[5px] text-[#666]">
              <SearchIcon className="text-[#777]" />
              All
            </div>
          </div>
          <SceneView />
        </div>
        <div className="flex w-[99px] shrink-0 flex-col border-x border-[#1c1c1c] bg-[#393939]">
          <div className="h-[0.500px] shrink-0 bg-[#1c1c1c]" />
          <PanelTab label="Hierarchy" w={23} icon="list" box="w-[38px]" />
          <AddSearch label="All" field="w-[72px]" />
          <div className="flex shrink-0">
            <div className="flex w-[94px] flex-col overflow-hidden">
              <div className="flex h-[6.800px] shrink-0 items-center gap-[2px] bg-[#4b4b4b] pl-[14px] font-bold text-[#b8b8b8]">
                <Triangle open />
                <Cube color="#eee" />
                <Fit w={35}>SampleScene*</Fit>
              </div>
              <div className="flex h-[6.800px] shrink-0 items-center gap-[1px] pl-[26px] text-[#b0b0b0]">
                <Cube />
                <Fit w={32}>Main Camera</Fit>
              </div>
              <div className="flex h-[6.800px] shrink-0 items-center gap-[1px] bg-[#4b4b4b] pl-[21px] text-[#b0b0b0]">
                <Triangle open />
                <Cube color="#70c7f5" />
                <Fit w={44}>FABRICA DE VINO</Fit>
              </div>
              {nodes.map((n) => (
                <div key={n.name} className={`flex h-[6.770px] shrink-0 items-center gap-[1px] text-[#719fd2] ${n.pad}`}>
                  {n.leaf ? <span className="w-[4px]" /> : <Triangle open={n.open} />}
                  <Cube />
                  <Fit w={n.w}>{n.name}</Fit>
                </div>
              ))}
            </div>
            <div className="flex flex-1 flex-col bg-[#303030] pt-[8px]">
              <span className="h-[84px] rounded bg-[#5b5b5b]" />
            </div>
          </div>
          <div className="h-[1.500px] shrink-0 bg-[#1c1c1c]" />
          <PanelTab label="Project" w={17} icon="folder" box="w-[35px]" />
          <AddSearch field="w-[28px]" project />
          <div className="flex flex-1 bg-linear-to-b from-[#333] from-60% to-[#252525]">
            <ProjectTree gap="mt-[6px]" />
            <div className="flex flex-1 flex-col border-l border-[#222] text-[#b0b0b0]">
              <div className="flex h-[7px] items-center bg-[#3d3d3d] pl-[2px] font-bold">
                <Fit w={18}>Assets</Fit>
              </div>
              <div className="flex w-[49px] flex-col items-center pt-[10px]">
                <FolderIcon size="large" />
                <Fit w={15} className="mt-[5px] text-[5px]">Scenes</Fit>
                <div className="mt-[8px] flex h-[27px] w-[26px] items-center justify-center bg-[#414c58]">
                  <svg width="32" height="18" viewBox="0 0 32 18" className="shrink-0 overflow-visible">
                    <path d="M3 11l8-6 5 1 8-3 2 2-8 8-8 2-7-3z" fill="#8fb9ec" />
                    <path d="M3 12l7 3 8-2 7-7v2l-7 8-8 1-7-3z" fill="#5d8fca" />
                    <path d="M9 8l6 2M14 6l6 2" stroke="#cfe3fb" />
                    <circle cx="29" cy="8" r="3.500" fill="#d5d5d5" />
                    <path d="M28 6l3 2-3 2z" fill="#333" />
                  </svg>
                </div>
                <div className="mt-[1px] flex h-[6px] w-[26px] items-center justify-center rounded-sm bg-[#555]">
                  <Fit w={22} className="text-[5px]">FABRICA...</Fit>
                </div>
              </div>
            </div>
          </div>
        </div>
        <Inspector />
      </div>
      <svg className="absolute left-0 top-0 overflow-visible" width="506" height="249" viewBox="68 489 506 249">
        <circle cx="507.500" cy="572" r="4.500" fill="#f1e400" />
        <path d="M508 569v6" stroke="#907b00" />
        <ellipse cx="515" cy="551" rx="80.500" ry="68.500" fill="none" stroke="#ff0000" strokeWidth="11" />
      </svg>
    </section>
  );
}

const firstNote = [
  "4. Una vez que se haya",
  "terminado de exportar,",
  "nos vamos a Unity y",
  "arrastramos el archivo",
  "“.fbx” a la carpeta de",
];

const secondNote: [string, number][] = [
  ["5. Ahora arrastramos el", 202],
  ["archivo a la escena y", 190],
  ["modificamos la escala", 199],
  ["de tamaño a nuestra", 187],
  ["preferencia.", 108],
];

export default function App() {
  return (
    <div className="relative flex h-[791px] w-[1024px] overflow-hidden bg-white">
      <Watermark />
      <main className="relative w-[835px] shrink-0">
        <header className="flex h-[198px] pl-[36px] pt-[63px]">
          <Shield />
          <h1 className="ml-[38px] mt-[24px] flex w-[620px] flex-col items-center [font-family:Lato,sans-serif] text-[16px] font-black leading-[32px] text-black [-webkit-text-stroke:0.3px_black]">
            <Fit w={619} className="[word-spacing:2px]">DESARROLLO DE ENTORNOS VIRTUALES PRODUCTIVOS PARA EL APRENDIZAJE</Fit>
            <Fit w={227} className="[word-spacing:2px]">DE INGENIERIA DE METODOS</Fit>
          </h1>
        </header>
        <FirstFigure />
        <SecondFigure />
        <div className="absolute left-[115px] top-[214px] h-[172px] w-[267px] rounded-[30px] border-[3px] border-white bg-[#70ad47] pl-[18px] pr-[16px] pt-[12px] [font-family:Lato,sans-serif] text-[18.500px] leading-[24px] tracking-[0.700px] text-black">
          {firstNote.map((line) => (
            <p key={line} className="whitespace-nowrap [text-align-last:justify]">
              {line}
            </p>
          ))}
          <p>Assets.</p>
        </div>
        <div className="absolute left-[504px] top-[622px] flex h-[144px] w-[258px] flex-col items-start rounded-[26px] border-[3px] border-white bg-[#ffc000] pl-[16px] pt-[11px] [font-family:Lato,sans-serif] text-[18.500px] leading-[24px] text-black">
          {secondNote.map(([line, w]) => (
            <Fit key={line} w={w}>
              {line}
            </Fit>
          ))}
        </div>
      </main>
      <aside className="relative flex w-[187px] shrink-0 flex-col justify-end bg-[#002060]">
        <svg className="absolute left-0 top-0" width="187" height="791" viewBox="0 0 187 791">
          <path d="M0 0H187V337L0 436Z" fill="#008080" />
          <path d="M0.500 0V791M187 337L0 436" stroke="#1f4e79" fill="none" />
          <path d="M5.500 715.500H70C107 715.500 135.500 731 135.500 748.700C135.500 767 107 781.500 70 781.500H5.500Z" fill="#ffff00" stroke="#2f5597" strokeWidth="1.300" />
        </svg>
        <div className="relative mb-[32px] ml-[55px] [font-family:Lato,sans-serif] text-[20px] font-black leading-[30px] text-black">4</div>
      </aside>
    </div>
  );
}
